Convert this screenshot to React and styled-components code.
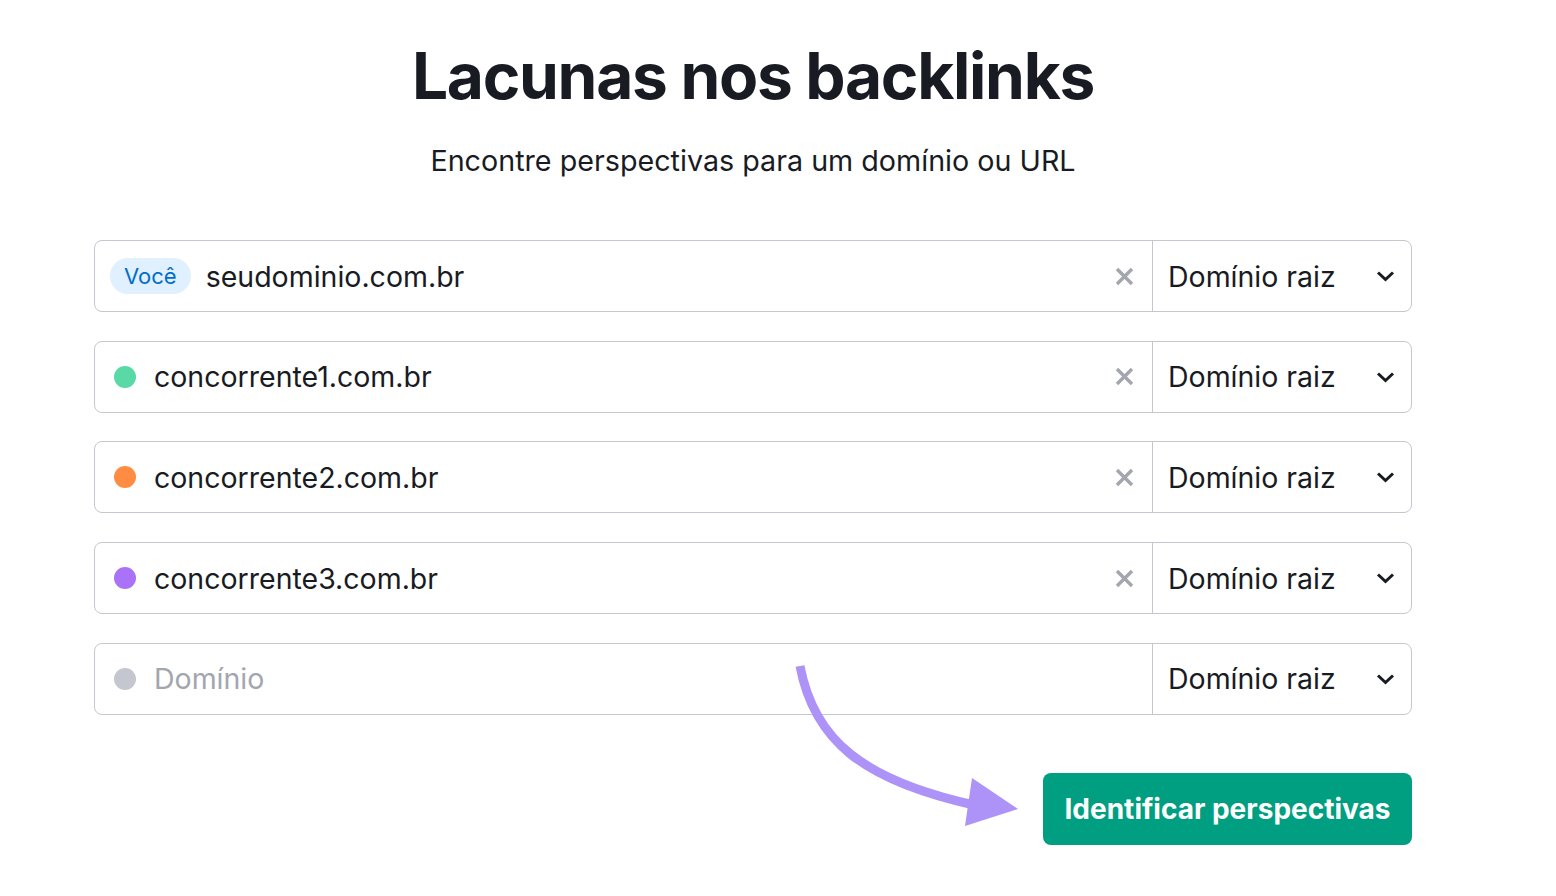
import React from "react";
import styled, { createGlobalStyle } from "styled-components";

const GlobalStyle = createGlobalStyle`
  body {
    margin: 0;
    background: #ffffff;
    font-family: Inter, "Noto Sans", sans-serif;
    color: #191b23;
  }
`;

const rows = [
  { badge: "Você", value: "seudominio.com.br" },
  { dot: "#59d9a6", value: "concorrente1.com.br" },
  { dot: "#ff8c43", value: "concorrente2.com.br" },
  { dot: "#a972f8", value: "concorrente3.com.br" },
  { dot: "#c4c7cf", placeholder: "Domínio" },
];

const App = () => {
  return (
    <Page>
      <GlobalStyle />
      <Column>
        <Title>Lacunas nos backlinks</Title>
        <Subtitle>Encontre perspectivas para um domínio ou URL</Subtitle>
        <Rows>
          {rows.map((r, i) => (
            <Row key={i}>
              <Field>
                {r.badge ? <Badge>{r.badge}</Badge> : <Dot color={r.dot} />}
                <Value placeholder={!!r.placeholder}>{r.value || r.placeholder}</Value>
                {r.value && (
                  <Clear>
                    <svg width="19" height="19" viewBox="0 0 19 19">
                      <path d="M2 2 L17 17 M17 2 L2 17" stroke="#a3a6ae" strokeWidth="3.4" />
                    </svg>
                  </Clear>
                )}
              </Field>
              <Select>
                <span>Domínio raiz</span>
                <svg width="19" height="12" viewBox="0 0 19 12">
                  <path d="M2 2.5 L9.5 9.5 L17 2.5" fill="none" stroke="#191b23" strokeWidth="3" />
                </svg>
              </Select>
            </Row>
          ))}
        </Rows>
        <Footer>
          <Arrow width="240" height="180" viewBox="0 0 240 180">
            <path d="M8 6 C 22 80, 70 120, 182 145" fill="none" stroke="#ad92f7" strokeWidth="9" />
            <polygon points="180,118 226,149 173,166" fill="#ad92f7" />
          </Arrow>
          <Button>Identificar perspectivas</Button>
        </Footer>
      </Column>
    </Page>
  );
};

export default App;

const Page = styled.div`
  width: 1556px;
  height: 896px;
  padding-left: 94px;
  box-sizing: border-box;
`;
const Column = styled.div`
  width: 1318px;
  display: flex;
  flex-direction: column;
`;
const Title = styled.h1`
  margin: 36px 0 0;
  text-align: center;
  font-size: 64px;
  line-height: 80px;
  font-weight: 700;
  letter-spacing: -1.3px;
  color: #191b23;
`;
const Subtitle = styled.p`
  margin: 25px 0 0;
  text-align: center;
  font-size: 28.7px;
  line-height: 40px;
  color: #191b23;
`;
const Rows = styled.div`
  margin-top: 59px;
  display: flex;
  flex-direction: column;
  gap: 28.7px;
`;
const Row = styled.div`
  height: 72px;
  box-sizing: border-box;
  border: 1px solid #c4c7cf;
  border-radius: 8px;
  display: flex;
  align-items: stretch;
`;
const Field = styled.div`
  flex: 1;
  display: flex;
  align-items: center;
  padding: 0 18px 0 15px;
`;
const Dot = styled.span`
  width: 22px;
  height: 22px;
  border-radius: 50%;
  background: ${(p) => p.color};
  margin: 0 18px 0 4px;
  flex-shrink: 0;
`;
const Badge = styled.span`
  height: 36px;
  padding: 0 14px;
  border-radius: 18px;
  background: #e0f0ff;
  color: #006dca;
  font-size: 22px;
  display: flex;
  align-items: center;
  margin-right: 15px;
`;
const Value = styled.span`
  flex: 1;
  font-size: 28.5px;
  color: ${(p) => (p.placeholder ? "#a3a6ae" : "#191b23")};
`;
const Clear = styled.span`
  display: flex;
  align-items: center;
`;
const Select = styled.div`
  width: 259px;
  box-sizing: border-box;
  border-left: 1px solid #c4c7cf;
  display: flex;
  align-items: center;
  justify-content: space-between;
  padding: 0 16px 0 15px;
  font-size: 28.5px;
  color: #191b23;
`;
const Footer = styled.div`
  position: relative;
  margin-top: 58px;
  display: flex;
  justify-content: flex-end;
`;
const Arrow = styled.svg`
  position: absolute;
  left: 698px;
  top: -113px;
`;
const Button = styled.button`
  height: 72px;
  width: 369px;
  border: none;
  border-radius: 8px;
  background: #009f81;
  color: #ffffff;
  font-family: Inter, "Noto Sans", sans-serif;
  font-size: 28px;
  font-weight: 700;
  cursor: pointer;
`;
